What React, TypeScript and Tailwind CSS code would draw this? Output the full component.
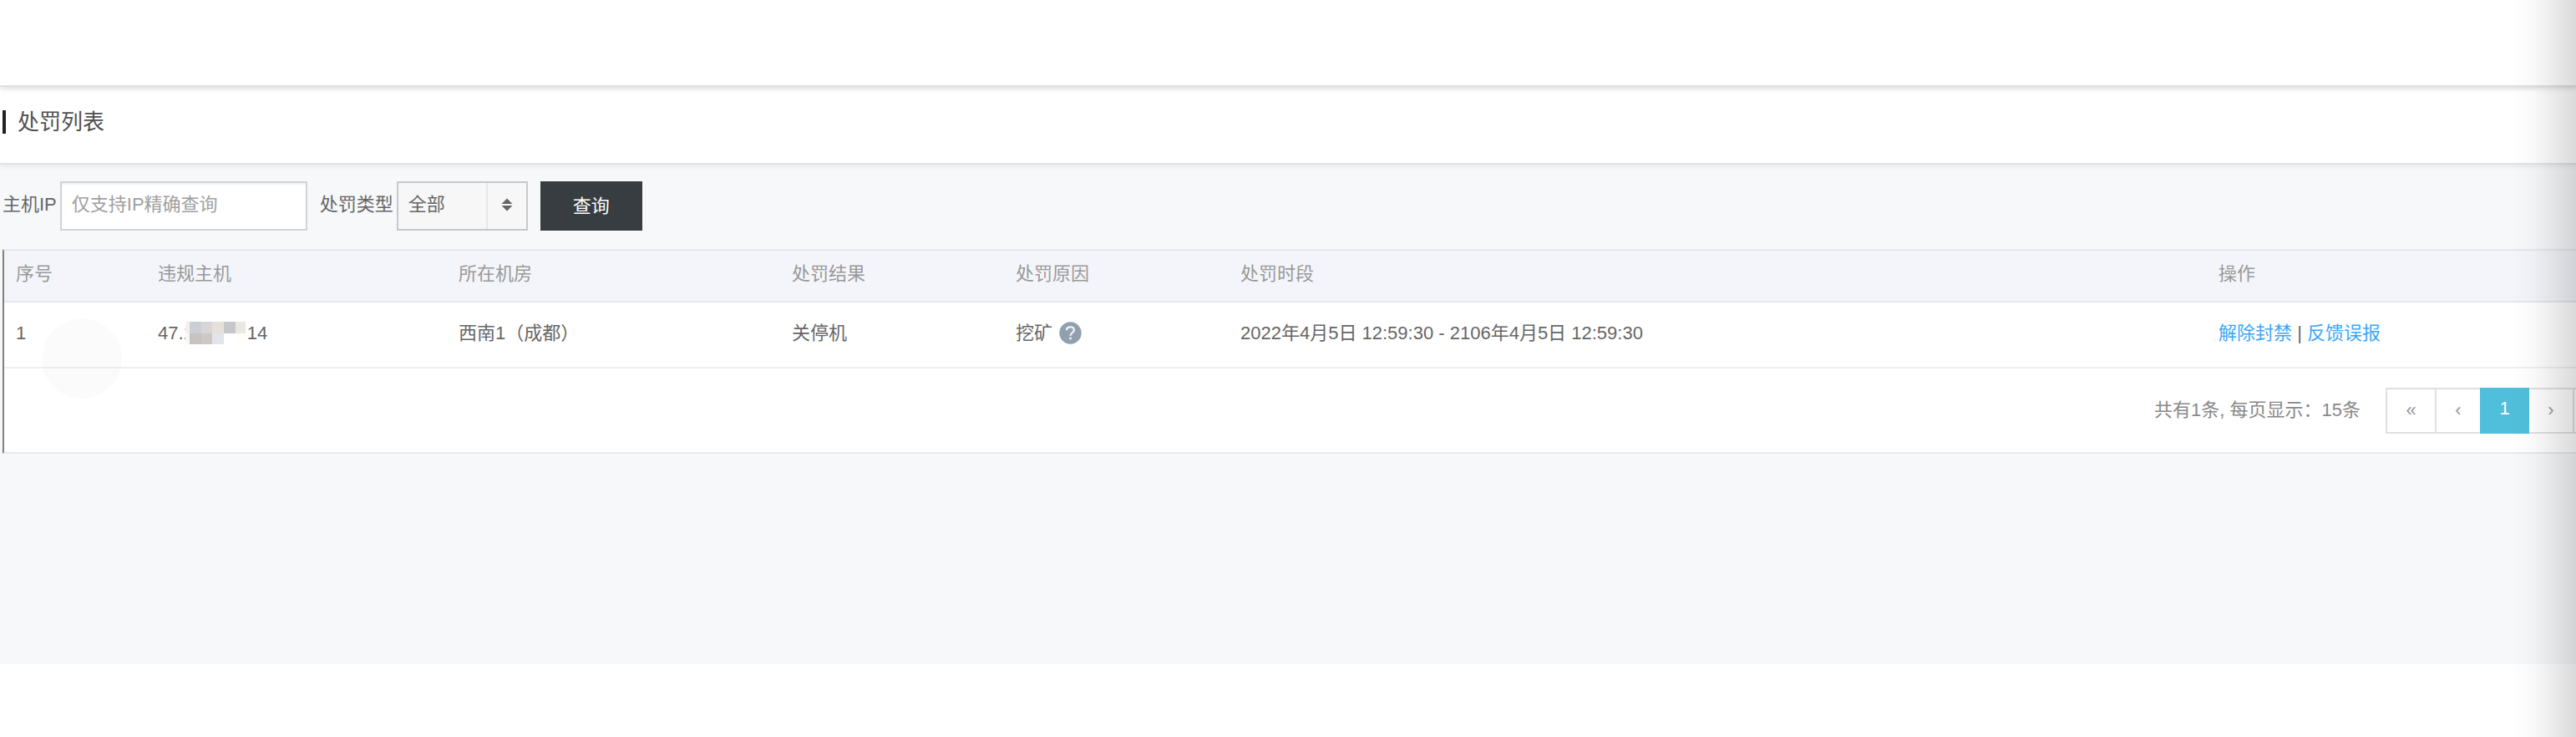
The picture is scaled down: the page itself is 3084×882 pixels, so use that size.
import { useState } from "react";

const COLUMNS = [
  { label: "序号", width: "w-[170px]" },
  { label: "违规主机", width: "w-[360px]" },
  { label: "所在机房", width: "w-[399px]" },
  { label: "处罚结果", width: "w-[268px]" },
  { label: "处罚原因", width: "w-[269px]" },
  { label: "处罚时段", width: "" },
  { label: "操作", width: "w-[442px]" },
];

const ROWS = [
  {
    id: 1,
    ipStart: "47.1",
    ipEnd: "14",
    room: "西南1（成都）",
    result: "关停机",
    reason: "挖矿",
    period: "2022年4月5日 12:59:30 - 2106年4月5日 12:59:30",
  },
];

// Pixelated cover over the middle of the host IP
function Mosaic() {
  return (
    <svg width="72" height="27" viewBox="0 0 72 27" shapeRendering="crispEdges" className="relative mr-0.5 -ml-2.5 shrink-0" aria-hidden="true">
      <rect width="72" height="27" fill="#fff" />
      <rect width="5" height="14" fill="#f1f1f1" />
      <rect y="14" width="5" height="13" fill="#f8f8f8" />
      <rect x="5" width="14" height="14" fill="#cacfd5" />
      <rect x="19" width="13" height="14" fill="#d9d5d5" />
      <rect x="32" width="14" height="14" fill="#e4e0dc" />
      <rect x="46" width="14" height="14" fill="#c6c7ca" />
      <rect x="60" width="12" height="14" fill="#ebe7e1" />
      <rect x="5" y="14" width="14" height="13" fill="#c8c3c0" />
      <rect x="19" y="14" width="13" height="13" fill="#ccc8c6" />
      <rect x="32" y="14" width="14" height="13" fill="#e1e5e9" />
      <rect x="60" y="14" width="12" height="13" fill="#fefff6" />
    </svg>
  );
}

function HelpIcon() {
  return (
    <svg width="27" height="27" viewBox="0 0 27 27" fill="none" aria-hidden="true">
      <circle cx="13.5" cy="13.5" r="13.2" fill="#91a0af" />
      <path d="M9 10.2C9 7.8 10.8 6.4 13.4 6.4s4.5 1.4 4.5 3.6c0 3.2-4.4 3.2-4.4 6.8" stroke="#f1f3f5" strokeWidth="2.3" />
      <rect x="12.2" y="18.6" width="2.6" height="2.6" fill="#f1f3f5" />
    </svg>
  );
}

export default function App() {
  const [ip, setIp] = useState("");
  const [type, setType] = useState("all");

  return (
    <div className="relative min-h-screen overflow-hidden bg-white text-[22px] leading-8 text-[#666] [font-family:'Liberation_Sans','Noto_Sans_CJK_SC',sans-serif]">
      {/* Top bar */}
      <header className="relative z-10 h-[104px] border-b-2 border-[#e0e0e0] bg-white shadow-[0_2px_6px_rgba(0,0,0,0.14)]" />

      {/* Title */}
      <div className="relative flex h-[93px] items-center border-b-2 border-[#e2e4e4] bg-white pb-2 pl-[3px] shadow-[0_2px_6px_rgba(0,0,0,0.07)]">
        <h1 className="flex items-center gap-3.5 text-[26px] text-[#505050]">
          <span className="h-7 w-1 bg-[#222]" />
          处罚列表
        </h1>
      </div>

      <main className="bg-[#f6f8fa] pt-5 pb-[252px]">
        {/* Filters */}
        <form className="flex items-center gap-[15px] pl-[3px]" onSubmit={(e) => e.preventDefault()}>
          <div className="flex items-center gap-1">
            <label htmlFor="host-ip" className="pb-1">主机IP</label>
            <input
              id="host-ip"
              type="text"
              value={ip}
              onChange={(e) => setIp(e.target.value)}
              placeholder="仅支持IP精确查询"
              className="h-[59px] w-[296px] border-2 border-[#d2d4d4] bg-white px-3 pb-1 shadow-[inset_0_2px_2px_rgba(0,0,0,0.06)] outline-none placeholder:text-[#a0a0a0]"
            />
          </div>
          <div className="flex items-center gap-1">
            <label htmlFor="punish-type" className="pb-1">处罚类型</label>
            <div className="relative">
              <select
                id="punish-type"
                value={type}
                onChange={(e) => setType(e.target.value)}
                className="block h-[59px] w-[157px] appearance-none border-2 border-[#c8c8c8] bg-[#f7f7f7] pr-12 pb-1 pl-3 outline-none"
              >
                <option value="all">全部</option>
              </select>
              <div className="pointer-events-none absolute inset-y-0.5 right-0.5 flex w-12 items-center justify-center border-l-2 border-[#e6e6e6] pb-1">
                <svg width="14" height="16" viewBox="0 0 14 16" fill="#666" aria-hidden="true">
                  <path d="M7 0.5 13.5 7H0.5zM7 15.5 0.5 9H13.5z" />
                </svg>
              </div>
            </div>
          </div>
          <button type="submit" className="h-[59px] w-[122px] bg-[#373d41] text-white">
            查询
          </button>
        </form>

        {/* Punishment list */}
        <section className="mt-[22px] ml-[3px] border-y-2 border-l-2 border-y-[#e6e8ec] border-l-[#808080] bg-white">
          <table className="w-full table-fixed text-left">
            <thead>
              <tr className="h-[61px] border-b-2 border-[#e5e6ea] bg-[#f4f5fa] text-[#999]">
                {COLUMNS.map(({ label, width }) => (
                  <th key={label} className={`${width} px-3.5 pb-1 font-normal`}>
                    {label}
                  </th>
                ))}
              </tr>
            </thead>
            <tbody>
              {ROWS.map((row) => (
                <tr key={row.id} className="h-[79px] border-b-2 border-[#efefef]">
                  <td className="px-3.5 pb-1">{row.id}</td>
                  <td className="px-3.5 pb-1">
                    <div className="flex items-center">
                      <span>{row.ipStart}</span>
                      <Mosaic />
                      <span>{row.ipEnd}</span>
                    </div>
                  </td>
                  <td className="px-3.5 pb-1">{row.room}</td>
                  <td className="px-3.5 pb-1">{row.result}</td>
                  <td className="px-3.5 pb-1">
                    <div className="flex items-center gap-2">
                      {row.reason}
                      <HelpIcon />
                    </div>
                  </td>
                  <td className="px-3.5 pb-1">{row.period}</td>
                  <td className="px-3.5 pb-1">
                    <a href="#unban" className="text-[#3ba7fb]">解除封禁</a>
                    {" | "}
                    <a href="#feedback" className="text-[#3ba7fb]">反馈误报</a>
                  </td>
                </tr>
              ))}
            </tbody>
          </table>

          {/* Pagination */}
          <div className="flex h-[100px] items-center justify-end gap-[30px] text-[#888]">
            <p>共有1条, 每页显示：15条</p>
            <nav className="flex h-[55px] text-[22px] text-[#999]">
              <button type="button" className="w-[61px] border-2 border-[#e0e0e0]">«</button>
              <button type="button" className="w-[52px] border-y-2 border-[#e0e0e0]">‹</button>
              <button type="button" className="w-[59px] bg-[#50bfdb] pb-1 text-white">1</button>
              <button type="button" className="w-[54px] border-2 border-l-0 border-[#e0e0e0]">›</button>
              <span className="w-0.5 border-y-2 border-[#e0e0e0]" />
            </nav>
          </div>
        </section>
      </main>

      {/* Shadow of the side drawer */}
      <div className="pointer-events-none absolute inset-y-0 right-0 z-20 w-20 border-r border-black/15 bg-linear-to-r from-black/0 via-black/2 via-35% to-black/14" />
      {/* Floating handle */}
      <div className="pointer-events-none absolute top-[381px] left-[50px] size-24 rounded-full bg-black/[0.016]" />
    </div>
  );
}
